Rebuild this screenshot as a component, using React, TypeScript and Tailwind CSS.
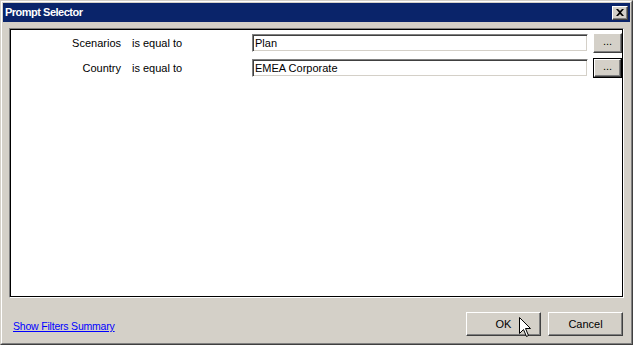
const font = { fontFamily: '"Liberation Sans", Arial, sans-serif' };

function SunkenInput({ value }: { value: string }) {
  return (
    <div className="flex h-[18px] w-[336px] items-center border-t border-l border-b border-r border-t-[#808080] border-l-[#808080] border-b-white border-r-white bg-white pl-[2px] text-[11px] text-black shadow-[inset_1px_1px_0_#404040,inset_-1px_-1px_0_#d4d0c8]">
      {value}
    </div>
  );
}

function DotsButton({ focused }: { focused?: boolean }) {
  const inner = (
    <div className="flex h-full w-full items-center justify-center border-t border-l border-b border-r border-t-white border-l-white border-b-[#404040] border-r-[#404040] bg-[#d4d0c8] pb-[3px] text-[11px] leading-none text-black shadow-[inset_-1px_-1px_0_#808080]">
      ...
    </div>
  );
  if (focused) {
    return <div className="h-[20px] w-[29px] border border-black">{inner}</div>;
  }
  return <div className="h-[20px] w-[29px]">{inner}</div>;
}

function DialogButton({ label }: { label: string }) {
  return (
    <div className="flex h-[24px] w-[75px] items-center justify-center border-t border-l border-b border-r border-t-white border-l-white border-b-[#404040] border-r-[#404040] bg-[#d4d0c8] text-[11px] text-black shadow-[inset_-1px_-1px_0_#808080,inset_1px_1px_0_#d4d0c8]">
      {label}
    </div>
  );
}

function FilterRow({ field, value, focused }: { field: string; value: string; focused?: boolean }) {
  return (
    <div className="flex h-[20px] items-center text-[11px] text-black">
      <div className="w-[111px] pr-[1px] text-right">{field}</div>
      <div className="ml-[10px] w-[120px]">is equal to</div>
      <SunkenInput value={value} />
      <div className="ml-[5px]">
        <DotsButton focused={focused} />
      </div>
    </div>
  );
}

export default function App() {
  return (
    <div
      style={font}
      className="relative h-[345px] w-[633px] overflow-hidden border-t border-l border-b border-r border-t-[#d4d0c8] border-l-[#d4d0c8] border-b-[#404040] border-r-[#404040] bg-[#d4d0c8]"
    >
      <div className="flex h-full w-full flex-col border-t border-l border-b border-r border-t-white border-l-white border-b-[#808080] border-r-[#808080] p-[1px]">
        {/* title bar */}
        <div className="flex h-[19px] items-center justify-between bg-[#0a246a] pl-[2px] pr-[2px]">
          <span className="text-[11px] font-bold tracking-[-0.5px] text-white">Prompt Selector</span>
          <div className="flex h-[14px] w-[16px] items-center justify-center border-t border-l border-b border-r border-t-white border-l-white border-b-[#404040] border-r-[#404040] bg-[#d4d0c8] shadow-[inset_-1px_-1px_0_#808080]">
            <svg width="8" height="7" viewBox="0 0 8 7">
              <path d="M0 0h2l2 2 2-2h2L5 3.5 8 7H6L4 5 2 7H0l3-3.5z" fill="black" />
            </svg>
          </div>
        </div>

        {/* body */}
        <div className="ml-[6px] mr-[6px] mt-[6px] flex h-[270px] flex-col border-t border-l border-b border-r border-t-[#808080] border-l-[#808080] border-b-white border-r-white">
          <div className="flex h-full flex-col gap-[5px] border border-black bg-white pt-[3px]">
            <FilterRow field="Scenarios" value="Plan" />
            <FilterRow field="Country" value="EMEA Corporate" focused />
          </div>
        </div>

        {/* footer */}
        <div className="flex flex-1 items-end justify-between pb-[6px] pl-[10px] pr-[7px]">
          <a href="#" className="mb-[1px] text-[10.5px] tracking-[-0.2px] text-[#0000ff] underline">
            Show Filters Summary
          </a>
          <div className="flex gap-[7px]">
            <DialogButton label="OK" />
            <DialogButton label="Cancel" />
          </div>
        </div>
      </div>

      {/* mouse pointer over OK */}
      <svg className="absolute left-[518px] top-[316px]" width="13" height="21" viewBox="0 0 13 21">
        <path d="M0.5 0.5V16.5L4.5 12.5L7.5 19.5L9.5 18.5L6.5 11.5H11.5Z" fill="white" stroke="black" strokeWidth="1" />
      </svg>
    </div>
  );
}
